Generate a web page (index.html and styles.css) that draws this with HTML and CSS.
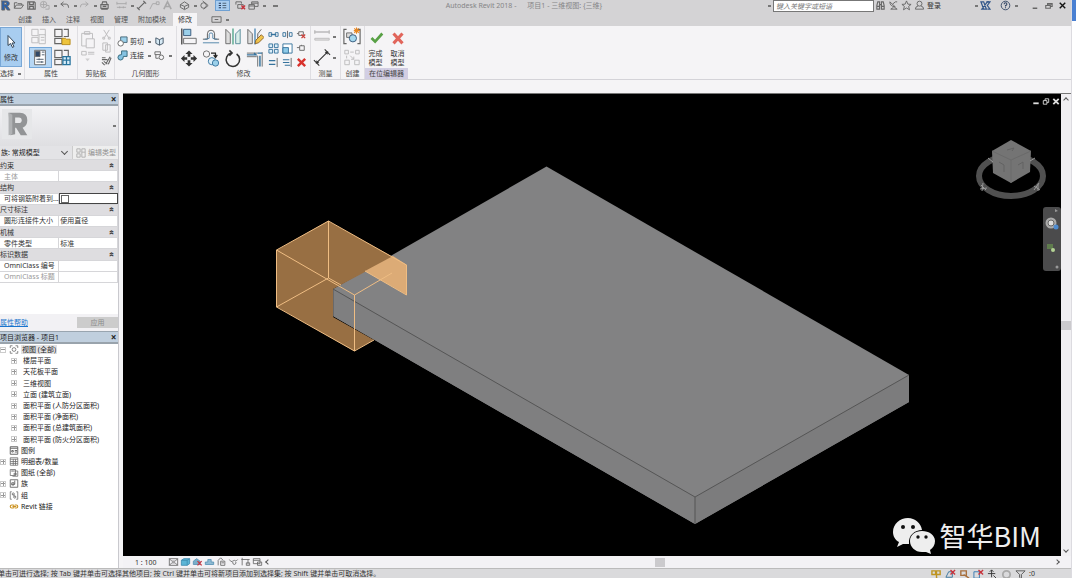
FILE: index.html
```html
<!DOCTYPE html>
<html lang="zh-CN">
<head>
<meta charset="utf-8">
<title>Autodesk Revit 2018</title>
<link rel="stylesheet" href="styles.css">
</head>
<body>
<div class="app">
  <header class="titlebar">
    <div class="quick">
      <button class="ic" aria-label="应用程序菜单"><svg viewBox="0 0 12 12"><path d="M1 1h6c4 0 4 5 1 5.500l3 4.500h-3l-3-4v4H2V1" fill="#2a62ad"/><path d="M4.500 3h2.500v2H4.500z" fill="#d4e4f4"/></svg></button>
      <button class="ic" aria-label="打开"><svg viewBox="0 0 12 12"><path d="M1.500 9V3h3l1 1h4v1.500M1.500 9l2-3.500h8L9 9z"/></svg></button>
      <button class="ic" aria-label="保存"><svg viewBox="0 0 12 12"><path d="M2 2h7l1 1v7H2zM4 2v3h4V2M4 10V7h4v3" stroke-width="1.300"/></svg></button>
      <button class="ic faint" aria-label="同步"><svg viewBox="0 0 12 12"><circle cx="5" cy="5" r="3.500"/><path d="M2 5h6M5 2v6M8 6h3v4H7"/></svg></button><i class="car"></i>
      <button class="ic" aria-label="放弃"><svg viewBox="0 0 12 12"><path d="M5 2L2 4.500 5 7M2 4.500h6q2.500 0 2.500 4"/></svg></button><i class="car"></i>
      <button class="ic faint" aria-label="重做"><svg viewBox="0 0 12 12"><path d="M7 2l3 2.500L7 7M10 4.500H4Q1.500 4.500 1.500 8"/></svg></button><i class="car"></i>
      <button class="ic" aria-label="打印"><svg viewBox="0 0 12 12"><path d="M3 5l1-3h4l1 3M2 5h8v4H2zM3 9v1h6V9M4 7h4" stroke-width="1.200"/></svg></button>
      <button class="ic gap faint" aria-label="测量"><svg viewBox="0 0 12 12"><path d="M1 4h10M1 2v3M11 2v3M1 8h10M4 7v2M8 7v2"/></svg></button><i class="car"></i>
      <button class="ic" aria-label="尺寸标注"><svg viewBox="0 0 12 12"><path d="M2 10L10 2M1 8l3 3M8 1l3 3" stroke-width="1.300"/></svg></button>
      <button class="ic faint" aria-label="标记"><svg viewBox="0 0 12 12"><path d="M1 10l3-6h4M8 2h3v3H8z"/></svg></button>
      <button class="ic faint" aria-label="文字"><svg viewBox="0 0 12 12"><path d="M2 10L6 2l4 8M3.500 7h5" stroke-width="1.700"/></svg></button>
      <button class="ic gap" aria-label="三维视图"><svg viewBox="0 0 12 12"><path d="M1.500 5L6 2l4.500 3v3L6 10.500 1.500 8zM1.500 5L6 7l4.500-2M6 7v3"/></svg></button><i class="car"></i>
      <button class="ic" aria-label="剖面"><svg viewBox="0 0 12 12"><circle cx="5" cy="6" r="3"/><path d="M4 1l6 5-5 4"/></svg></button>
      <button class="ic on" aria-label="细线"><svg viewBox="0 0 12 12"><path d="M1 3h3M1 6h3M1 9h3" stroke="#263b5c" stroke-width="1.600"/><path d="M6 3h5M6 6h5M6 9h5" stroke="#345"/></svg></button>
      <button class="ic" aria-label="关闭隐藏窗口"><svg viewBox="0 0 12 12"><path d="M1 5V2h6v2M3 5h6v4H3z"/><path d="M7 6l4 4M11 6l-4 4" stroke="#c8333c" stroke-width="1.500"/></svg></button>
      <button class="ic" aria-label="切换窗口"><svg viewBox="0 0 12 12"><path d="M1 5h6v5H1zM4 5V2h7v5H7M4 3.500h7M1 6.500h6"/></svg></button><i class="car"></i>
      <i class="car big"></i>
    </div>
    <h1 class="title">Autodesk Revit 2018 - &nbsp; &nbsp; &nbsp;项目1 - 三维视图: {三维}</h1>
    <div class="info">
      <i class="car side-car"></i>
      <input class="search" type="text" aria-label="搜索" placeholder="键入关键字或短语">
      <button class="ic" aria-label="查找"><svg viewBox="0 0 12 12"><path d="M2 10V6l1-4h2v8zM7 10V2h2l1 4v4zM5 5h2M2 7h3M7 7h3" stroke-width="1.200"/></svg></button>
      <button class="ic" aria-label="通讯中心"><svg viewBox="0 0 12 12"><path d="M2 2q0 5 6 5.500zM5 4.500L8 2M8 2h2M6 8l-3 2h7L7 8"/></svg></button>
      <button class="ic" aria-label="收藏夹"><svg viewBox="0 0 12 12"><path d="M6 1l1.500 3.500 3.500.3L8.300 7l1 3.700L6 8.700l-3.300 2 1-3.700L1 4.800l3.500-.3z"/></svg></button>
      <button class="ic" aria-label="用户"><svg viewBox="0 0 12 12"><circle cx="6" cy="4" r="2.700"/><path d="M4.500 6.500Q1.500 7 1.500 10h9q0-3-3-3.500"/></svg></button>
      <button class="login">登录</button><i class="car far"></i>
      <button class="ic" aria-label="应用商店"><svg viewBox="0 0 12 12"><path d="M1 2h3l3 8H4zM10 2H8L2 10h2" stroke="#34588b" stroke-width="1.300"/><path d="M7 2h4L8 6l3 4H8" stroke="#34588b" stroke-width="1.300"/></svg></button>
      <button class="ic help" aria-label="帮助"><svg viewBox="0 0 12 12"><circle cx="6" cy="6" r="4.700" stroke="#334766"/><path d="M4.500 4.500q0-1.500 1.500-1.500t1.500 1.500Q7.500 5.500 6 6v1M6 8v1" stroke="#334766" stroke-width="1.200"/></svg></button><i class="car"></i>
      <button class="ic win first" aria-label="最小化"><svg viewBox="0 0 12 12"><path d="M4 9h5" stroke-width="1.600"/></svg></button>
      <button class="ic win" aria-label="还原"><svg viewBox="0 0 12 12"><path d="M3 6h5v3H3zM5 6V4h5v3H8M5 4.500h5" stroke-width="1.200"/></svg></button>
      <button class="ic win" aria-label="关闭"><svg viewBox="0 0 12 12"><path d="M3 3l6 6M9 3L3 9" stroke="#111" stroke-width="1.500"/></svg></button>
    </div>
  </header>

  <nav class="tabs">
    <a href="#">创建</a><a href="#">插入</a><a href="#">注释</a><a href="#">视图</a><a href="#">管理</a><a href="#">附加模块</a><a href="#" class="active">修改</a>
    <button class="ic" aria-label="面板显示"><svg viewBox="0 0 12 12"><path d="M1 3h10v6H1zM4 6h4" stroke="#666"/></svg></button><i class="car"></i>
  </nav>

  <div class="ribbon">
    <section class="grp select">
      <button class="bigsel"><svg viewBox="0 0 16 16"><path d="M5 2v10l2.500-2 2 4 1.500-1-2-3.500h3z" fill="#fff" stroke="#345"/></svg>修改</button>
      <h2>选择 <i class="car dark"></i></h2>
    </section>
    <section class="grp">
      <div class="cells props">
        <button class="b faint" aria-label="类型属性"><svg viewBox="0 0 20 20"><path d="M2 2h7v7H2zM11 2h6v7M2 11h7v6H2zM10 8h7v10h-7zM12 11h4M12 14h4"/></svg></button>
        <button class="b" aria-label="族类别"><svg viewBox="0 0 20 20"><path d="M2 2h8v8H2zM12 2h5v8h-5M2 12h8v6H2z" stroke-width="1.300"/><path d="M10 12h4l1 1h4v6h-9z" fill="#edc33c" stroke="#b58919"/></svg></button>
        <button class="b lit" aria-label="属性"><svg viewBox="0 0 20 20"><path d="M4 2h12v16H4z" fill="#fff"/><path d="M5 3h5v6H5z" fill="#314866"/><path d="M12 4h3M12 7h3M6 12h8M6 15h8M9 11v2M12 14v2" stroke="#456"/></svg></button>
        <button class="b" aria-label="族类型"><svg viewBox="0 0 20 20"><path d="M2 2h8v8H2zM12 2h5v8h-5M2 12h8v6H2z" stroke-width="1.300"/><path d="M11 9h8v9h-8zM15 9v9M11 13h8" stroke="#27739d" stroke-width="1.400" fill="#d8edf8"/></svg></button>
      </div>
      <h2>属性</h2>
    </section>
    <section class="grp tight">
      <div class="cells clip">
        <button class="b tall faint" aria-label="粘贴"><svg viewBox="0 0 20 36"><path d="M3 4h12v6M3 4v14h5M6 2h6v3H6zM8 10h9v10H8zM3 24h5v4H3zM10 25h7M10 27h7"/><path d="M7 32h5l-2.500 3z" fill="#999" stroke="none"/></svg></button>
        <div class="col">
          <button class="s faint" aria-label="剪切"><svg viewBox="0 0 12 12"><path d="M3 1l5 8M9 1L4 9M2 9h2v2H2zM8 9h2v2H8z"/></svg></button>
          <button class="s faint" aria-label="复制"><svg viewBox="0 0 12 12"><path d="M2 1h5v8H2zM5 3h5v8H5z"/></svg></button>
          <button class="s" aria-label="匹配类型"><svg viewBox="0 0 12 12"><path d="M1 3h4M1 5h6M1 8l3 3M5 10l5-8M8 10l3-7M3 7l4 3" stroke-width="1.200"/></svg></button>
        </div>
      </div>
      <h2>剪贴板</h2>
    </section>
    <section class="grp">
      <div class="geom">
        <button class="t"><svg viewBox="0 0 12 12"><path d="M4 1h7v6H4z" fill="#9bd0ea" stroke="#467"/><circle cx="4" cy="8" r="3" fill="#fff"/></svg>剪切</button><i class="car"></i>
        <button class="s" aria-label="面"><svg viewBox="0 0 12 12"><path d="M2 2l4 2v6L2 8zM6 4l4-2v6l-4 2" fill="#d7eaf5" stroke="#456"/></svg></button>
        <span></span>
        <button class="t"><svg viewBox="0 0 12 12"><path d="M5 1h6v6H7q0 4-3 4T1 8t4-3z" fill="#86c3e2" stroke="#367"/></svg>连接</button><i class="car"></i>
        <button class="s" aria-label="拆分面"><svg viewBox="0 0 12 12"><path d="M1 2h6v3H1zM2 5v4h3"/><circle cx="8" cy="8" r="2.500"/></svg></button><i class="car"></i>
      </div>
      <h2>几何图形</h2>
    </section>
    <section class="grp">
      <div class="modify">
        <div class="cells four">
          <button class="b" aria-label="对齐"><svg viewBox="0 0 20 20"><path d="M2 1v18" stroke="#444" stroke-width="1.500"/><path d="M4 2h8v7H4z" fill="#9bd0ea" stroke="#357"/><path d="M4 12h14v6H4z"/></svg></button>
          <button class="b" aria-label="偏移"><svg viewBox="0 0 20 20"><path d="M1 13h5V7q0-4 4-4t4 4v6h5" stroke="#555"/><path d="M1 17h18M3 13q3 0 5-1V8q0-2 2-2t2 2v4q2 1 5 1" stroke="#4a7fa5"/></svg></button>
          <button class="b" aria-label="镜像-拾取轴"><svg viewBox="0 0 20 20"><path d="M2 2l5 5v11H2z" fill="#ddd"/><path d="M18 2l-5 5v11h5z" fill="#d9eee8" stroke="#589"/><path d="M10 1v18" stroke="#397" stroke-width="1.300"/></svg></button>
          <button class="b" aria-label="镜像-绘制轴"><svg viewBox="0 0 20 20"><path d="M2 2l5 5v11H2zM17 2l-4 5v5" fill="#ddd"/><path d="M10 1v18" stroke="#37a" stroke-width="1.300"/><path d="M10 18l1-4 6-6 3 3-6 6z" fill="#f0c34c" stroke="#876027"/></svg></button>
          <button class="b" aria-label="移动"><svg viewBox="0 0 20 20"><path d="M10 1l4 4h-2.500v3h-3V5H6zM10 19l-4-4h2.500v-3h3v3H14zM1 10l4-4v2.500h3v3H5V14zM19 10l-4 4v-2.500h-3v-3h3V6z" fill="#333" stroke="none"/></svg></button>
          <button class="b" aria-label="复制图元"><svg viewBox="0 0 20 20"><circle cx="5" cy="5" r="3.500"/><path d="M10 4h5v4M13 6l2 3 2-3" stroke="#222" stroke-width="1.300"/><circle cx="11" cy="13" r="4" fill="#dceffa" stroke="#37739d"/><circle cx="15" cy="15" r="3.500" fill="#9bd0ea" stroke="#37739d"/></svg></button>
          <button class="b" aria-label="旋转"><svg viewBox="0 0 20 20"><path d="M8 4a7.500 7.500 0 1 0 6 1M6 1l3 3-3 3" stroke="#333" stroke-width="1.700"/></svg></button>
          <button class="b" aria-label="修剪"><svg viewBox="0 0 20 20"><path d="M1 4h12M13 7v12M18 3v16M1 8h11" stroke="#666"/><path d="M1 6h10l-2-2M13 4h5M15.500 7v12" stroke="#37739d" stroke-width="1.600"/></svg></button>
        </div>
        <div class="three">
          <button class="s" aria-label="拆分图元"><svg viewBox="0 0 12 12"><path d="M1 4h3v4H1zM8 4h3v4H8z" stroke="#37739d"/><path d="M3 6h6" stroke="#37739d" stroke-width="1.500"/></svg></button>
          <button class="s" aria-label="间隙拆分"><svg viewBox="0 0 12 12"><path d="M1 4h3v4H1zM8 4h3v4H8z" stroke="#37739d"/><path d="M6 2v8"/></svg></button>
          <button class="s" aria-label="解锁"><svg viewBox="0 0 12 12"><path d="M3 3h5v4H3zM1 5h2"/><path d="M6 6l4 4M10 6l-4 4" stroke="#cc3f38" stroke-width="1.400"/></svg></button>
          <button class="s" aria-label="阵列"><svg viewBox="0 0 12 12"><path d="M1 1h4v4H1zM7 1h4v4H7zM1 7h4v4H1zM7 7h4v4H7z" fill="#dceffa" stroke="#37739d"/></svg></button>
          <button class="s" aria-label="缩放"><svg viewBox="0 0 12 12"><path d="M1 1h10v10H1z" fill="#fff" stroke="#37739d"/><path d="M1 5h6v6H1z" fill="#8ecbe9" stroke="#37739d"/></svg></button>
          <button class="s" aria-label="锁定"><svg viewBox="0 0 12 12"><path d="M4 3h5v5H4zM1 5h3M6 3V2"/></svg></button>
          <button class="s" aria-label="修剪单个"><svg viewBox="0 0 12 12"><path d="M10 1v10"/><path d="M1 4h7M1 8h7" stroke="#37739d" stroke-width="1.300"/></svg></button>
          <button class="s" aria-label="修剪多个"><svg viewBox="0 0 12 12"><path d="M10 1v10"/><path d="M1 3h7M1 6h7M3 9h6" stroke="#37739d" stroke-width="1.300"/></svg></button>
          <button class="s" aria-label="删除"><svg viewBox="0 0 12 12"><path d="M2 2l8 8M10 2l-8 8" stroke="#d8322c" stroke-width="2.600"/></svg></button>
        </div>
      </div>
      <h2>修改</h2>
    </section>
    <section class="grp">
      <div class="measure">
        <button class="b faint" aria-label="对齐标注"><svg viewBox="0 0 20 20"><path d="M2 5h16M2 3v4M18 3v4" stroke-width="1.500"/><path d="M2 12h16v2H2z" fill="#ccc"/></svg></button><i class="car"></i>
        <button class="b" aria-label="测量距离"><svg viewBox="0 0 20 20"><path d="M4 16L16 4M1 13l6 6M13 1l6 6" stroke="#333" stroke-width="1.200"/><path d="M3 17l1-4 3 3zM17 3l-4 1 3 3z" fill="#333" stroke="none"/></svg></button><i class="car"></i>
      </div>
      <h2>测量</h2>
    </section>
    <section class="grp">
      <div class="cells one">
        <button class="b" aria-label="创建组"><svg viewBox="0 0 20 20"><path d="M4 2H1v16h3M16 2h3v16h-3" stroke-width="1.300"/><path d="M4 6h6v5H4z" fill="#ddd"/><circle cx="11" cy="12" r="4" fill="#a5d8ef" stroke="#357"/><path d="M15 0v7M12 3.500h7M12.500 1l5 5M17.500 1l-5 5" stroke="#e78621" stroke-width="1.200"/></svg></button>
        <button class="b faint" aria-label="创建类似"><svg viewBox="0 0 20 20"><path d="M2 2h4v4H2zM14 2h4v4h-4zM8 4h4M4 8v3M2 13h5v5H2zM13 13h5v5h-5zM8 8l4 4M12 9v3H9"/></svg></button>
      </div>
      <h2>创建</h2>
    </section>
    <section class="grp editor">
      <div class="finish">
        <button><svg viewBox="0 0 20 20"><path d="M5 10l4 4 8-9" stroke="#58a045" stroke-width="3"/></svg>完成<br>模型</button>
        <button><svg viewBox="0 0 20 20"><path d="M5 5l10 11M15 5L5 16" stroke="#e1655b" stroke-width="3.400"/></svg>取消<br>模型</button>
      </div>
      <h2>在位编辑器</h2>
    </section>
  </div>

  <main class="work">
    <aside class="side">
      <div class="phead"><h2>属性</h2><button aria-label="关闭属性">×</button></div>
      <div class="preview"><svg viewBox="0 0 32 32"><path d="M0 0h32v32H0z" fill="#e6e7e9"/><path d="M7 4h12q8 0 8 8 0 6-5 8l5 8h-7l-5-8h-1v7l-5 1z" fill="#929496"/><path d="M7 4l4 2v21l-4 1z" fill="#b0b2b4"/><path d="M14 9h4q3 0 3 3t-3 3h-4z" fill="#e6e7e9"/></svg><i class="car"></i></div>
      <div class="type">
        <div class="pick"><select aria-label="类型"><option>族: 常规模型</option></select></div>
        <button disabled><svg viewBox="0 0 12 12"><path d="M1 1h4v4H1zM7 1h4v10H7zM1 7h4v4H1zM7 5h4"/></svg>编辑类型</button>
      </div>
      <table class="ptable">
        <tr class="g"><th colspan="2">约束<b>«</b></th></tr>
        <tr class="off"><td>主体</td><td></td></tr>
        <tr class="g"><th colspan="2">结构<b>«</b></th></tr>
        <tr><td><label for="rebar">可将钢筋附着到...</label></td><td class="focus"><input id="rebar" type="checkbox"></td></tr>
        <tr class="g"><th colspan="2">尺寸标注<b>«</b></th></tr>
        <tr><td>圆形连接件大小</td><td>使用直径</td></tr>
        <tr class="g"><th colspan="2">机械<b>«</b></th></tr>
        <tr><td>零件类型</td><td>标准</td></tr>
        <tr class="g"><th colspan="2">标识数据<b>«</b></th></tr>
        <tr><td>OmniClass 编号</td><td></td></tr>
        <tr class="off"><td>OmniClass 标题</td><td></td></tr>
      </table>
      <div class="pfoot"><a href="#">属性帮助</a><button disabled>应用</button></div>
      <div class="phead"><h2>项目浏览器 - 项目1</h2><button aria-label="关闭项目浏览器">×</button></div>
      <ul class="tree">
        <li><i class="ex minus"></i><svg viewBox="0 0 12 12"><path d="M1 4V1h3M8 1h3v3M11 8v3H8M4 11H1V8"/><circle cx="6" cy="6" r="2.500"/></svg><span class="sel">视图 (全部)</span></li>
        <li class="sub"><i class="ex"></i>楼层平面</li>
        <li class="sub"><i class="ex"></i>天花板平面</li>
        <li class="sub"><i class="ex"></i>三维视图</li>
        <li class="sub"><i class="ex"></i>立面 (建筑立面)</li>
        <li class="sub"><i class="ex"></i>面积平面 (人防分区面积)</li>
        <li class="sub"><i class="ex"></i>面积平面 (净面积)</li>
        <li class="sub"><i class="ex"></i>面积平面 (总建筑面积)</li>
        <li class="sub"><i class="ex"></i>面积平面 (防火分区面积)</li>
        <li><i class="ex none"></i><svg viewBox="0 0 12 12"><path d="M1 1h10v10H1zM1 3h10M3 6h2v2H3zM7 6h3M7 8h3" stroke-width="1.300"/></svg>图例</li>
        <li><i class="ex"></i><svg viewBox="0 0 12 12"><path d="M1 1h10v10H1zM1 3h10M1 6h10M1 8.500h10M5 3v8M8 3v8"/></svg>明细表/数量</li>
        <li><i class="ex none"></i><svg viewBox="0 0 12 12"><path d="M1 2h7v8H1zM4 4h7v7H4M2 4h3M6 7h3v2H6z"/></svg>图纸 (全部)</li>
        <li><i class="ex"></i><svg viewBox="0 0 12 12"><path d="M1 1h10v10H1zM3 5h3v3H3zM7 2v5H3" stroke-width="1.200"/></svg>族</li>
        <li><i class="ex"></i><svg viewBox="0 0 12 12"><path d="M3 1H1v10h2M9 1h2v10H9M4 4l4 4"/><circle cx="5" cy="4" r="1.500"/><circle cx="7" cy="8" r="1.500"/></svg>组</li>
        <li><i class="ex none"></i><svg viewBox="0 0 12 12"><path d="M3 4h2q1 0 1 2t-1 2H3Q1 8 1 6t2-2zM7 4h2q2 0 2 2T9 8H7M4 6h5" stroke="#cb9220" stroke-width="1.500"/></svg>Revit 链接</li>
      </ul>
    </aside>

    <div class="view">
      <div class="canvas">
        <svg class="scene" viewBox="123 94 938 462" role="img" aria-label="三维模型">
          <path d="M546.500 166.500L909 375V402L695 524 333 316V289z" fill="#828283"/>
          <path d="M333 289L695 497V524L333 316z" fill="#7f7f80"/>
          <path d="M695 497L909 375V402L695 524z" fill="#7c7c7d"/>
          <path d="M333 289L695 497 909 375M695 497V524M333 289V316" fill="none" stroke="#555"/>
          <path d="M328 221L393 257 333 289V317L374 340 354 351 277 307V250z" fill="#986f43"/>
          <path d="M365 271L393 256 407 265V295z" fill="#dcab76"/>
          <path d="M276.500 250L328.500 221 406.500 265V295L365 271M276.500 250V307L354.500 351V295L276.500 250M354.500 295L392 273M328.500 221V278L276.500 307M328.500 278L341 285M354.500 351L374 340" fill="none" stroke="#efbd83"/>
        </svg>
        <div class="wctl"><button aria-label="最小化视图"><svg viewBox="0 0 10 10"><path d="M2 7h6" stroke-width="2"/></svg></button><button aria-label="还原视图"><svg viewBox="0 0 10 10"><path d="M2 4h4v4H2zM4 4V2h4v4H6"/></svg></button><button aria-label="关闭视图"><svg viewBox="0 0 10 10"><path d="M2 2l6 6M8 2L2 8" stroke-width="2"/></svg></button></div>
        <svg class="cube" viewBox="0 0 72 62" role="img" aria-label="视图立方体"><ellipse cx="36" cy="37" rx="32" ry="20" fill="none" stroke="#505050" stroke-width="6"/><path d="M36 1L56 12 55 33 36 44 18 34 17 12z" fill="#747474"/><path d="M17 12L36 21 56 12M36 21V44" fill="none" stroke="#6a6a6a"/><path d="M32 11l7-2-2 3M24 23l5 3v7M43 26l5-3v7" fill="none" stroke="#626262"/><path d="M6 46l5 5M5 50l7-1M8 44l-1 8M59 47l6 4M59 51l5-7M63 45v7M13 19l5 4M55 22l5-3" stroke="#999"/></svg>
        <div class="nav">
          <svg viewBox="0 0 18 64"><path d="M12 2l3 2-3 1z" fill="#999"/><circle cx="8" cy="16" r="5.500" fill="#aaa"/><circle cx="8" cy="16" r="3" fill="#ddd" stroke="#666"/><circle cx="13" cy="20" r="2.500" fill="#4d8bd0"/><path d="M4 37h6v5H4z" fill="#5f7c4d"/><circle cx="10" cy="43" r="2" fill="#b4d394"/><circle cx="14" cy="60" r="1.500" fill="#999"/></svg>
        </div>
        <div class="mark"><svg viewBox="0 0 42 36"><path d="M15 0C7 0 0 6 0 14c0 4 2 8 6 10l-2 5 6-3h6C15 17 22 12 29 12 28 5 22 0 15 0z" fill="#eee"/><path d="M29 13c-7 0-12 4-12 10s5 11 12 11h4l5 2-1-4c3-2 5-5 5-9 0-6-6-10-13-10z" fill="#eee"/><g fill="#111"><circle cx="10" cy="9" r="2"/><circle cx="20" cy="9" r="2"/><circle cx="25" cy="19" r="1.700"/><circle cx="33" cy="19" r="1.700"/></g></svg>智华BIM</div>
      </div>
      <div class="vscroll"><b class="up"></b><b class="thumb"></b><b class="down"></b></div>
      <div class="vbar">
        <span class="scale">1 : 100</span>
        <button class="s" aria-label="详细程度"><svg viewBox="0 0 12 12"><path d="M1 2h10v8H1zM1 2l3 3h4l3-3M1 10l3-3h4l3 3"/></svg></button>
        <button class="s" aria-label="视觉样式"><svg viewBox="0 0 12 12"><path d="M1 4l3-2h7v6l-3 2H1z" fill="#5bb5d6" stroke="#3d8cb0"/><path d="M1 4h7v6M8 4l3-2" stroke="#3d8cb0"/></svg></button>
        <button class="s" aria-label="阴影"><svg viewBox="0 0 12 12"><path d="M1 9V5l4-3 4 3v4z" fill="#78aec9" stroke="#5791b5"/><path d="M6 5l5 5M11 5l-5 5" stroke="#ca3540" stroke-width="1.500"/></svg></button>
        <button class="s" aria-label="裁剪视图"><svg viewBox="0 0 12 12"><path d="M1 9V6h3V3h4v3h3v3z" fill="#8fbad3" stroke="#5791b5"/></svg></button>
        <button class="s" aria-label="显示裁剪"><svg viewBox="0 0 12 12"><path d="M2 10V4l3-3 3 3M5 5h5v5H5zM6 7h3"/></svg></button>
        <button class="s" aria-label="临时隐藏"><svg viewBox="0 0 12 12"><path d="M1 3q2 4 4 2t4 0l2-2M5 6q0 3 2 3t2-3"/></svg></button>
        <button class="s" aria-label="显示隐藏"><svg viewBox="0 0 12 12"><path d="M1 3h10M2 1v9M9 3v6M7 7h4v3H7z"/></svg></button>
        <button class="s" aria-label="分析模型"><svg viewBox="0 0 12 12"><path d="M1 2h8v6H1zM1 4h8M6 6h5v4H6z"/></svg></button>
        <b class="left"></b><span class="track"><b class="thumb"></b></span><b class="right"></b>
      </div>
    </div>
  </main>

  <footer class="status">
    <p>单击可进行选择; 按 Tab 键并单击可选择其他项目; 按 Ctrl 键并单击可将新项目添加到选择集; 按 Shift 键并单击可取消选择。</p>
    <div class="filters">
      <svg viewBox="0 0 12 12"><path d="M1 2h4v4H1zM6 2h4v4H6zM6 6v4l3 1" stroke="#be9420" stroke-width="1.500"/></svg>
      <svg viewBox="0 0 12 12"><path d="M1 9l3-6h4v6z" stroke="#37739d"/><path d="M6 1l5 5M11 1L6 6" stroke="#c8333c" stroke-width="1.500"/></svg>
      <svg viewBox="0 0 12 12"><path d="M2 2h6v5H2zM5 6l6 4" stroke="#a86f3c" stroke-width="1.500"/></svg>
      <svg viewBox="0 0 12 12"><path d="M1 3h6v7H1z" stroke="#3679b2"/><path d="M6 1l5 5M11 1L6 6" stroke="#c8333c" stroke-width="1.500"/></svg>
      <svg viewBox="0 0 12 12"><path d="M5 1v8M1 5h8M7 7l4 4M3 3l2-2 2 2" stroke="#333"/></svg>
      <svg viewBox="0 0 12 12"><circle cx="6" cy="6" r="4" stroke="#aaa" stroke-width="2"/></svg>
      <svg viewBox="0 0 12 12"><path d="M1 2h10L7 6v5L5 9V6z" stroke="#555"/></svg><span>:0</span>
    </div>
  </footer>
</div>
<div class="edge"></div>
</body>
</html>
```

FILE: styles.css
```css
* { box-sizing: border-box; }
body {
  margin: 0; height: 100vh; display: flex; overflow: hidden;
  font: 7px/9px "Noto Sans", "Noto Sans CJK SC", sans-serif;
  color: #333; background: #fff;
}
h1, h2, p, ul { margin: 0; padding: 0; font: inherit; }
button { font: inherit; color: inherit; background: none; border: 0; padding: 0; margin: 0; display: block; flex: none; }
svg { display: block; fill: none; stroke: #666; stroke-width: 1; }
a { color: inherit; text-decoration: none; }
.app { flex: 1; min-width: 0; display: flex; flex-direction: column; background: #f5f4f6; border-right: 1px solid #dcdbe0; }
.edge { width: 4px; background: linear-gradient(#4a80d2 21px, #fff 21px); }
.faint { opacity: .4; }
.car { flex: none; width: 7px; height: 4px; background: linear-gradient(#777, #777) center / 3px 2px no-repeat; }
.car.big { width: 14px; background-size: 5px 2px; }
.car.dark { display: inline-block; }

.titlebar { display: flex; align-items: center; height: 13px; padding-bottom: 2px; background: #d4d3d5; }
.quick, .info { display: flex; align-items: center; flex: none; }
.ic { width: 12px; height: 11px; margin-right: 1px; }
.ic svg { width: 11px; height: 11px; }
.ic.gap { margin-left: 4px; }
.ic.on { width: 15px; margin: 0 5px 0 3px; background: #a9cdf0; border: 1px solid #6fa0d2; padding-left: 1px; }
.ic.on svg { width: 11px; height: 9px; }
.title { flex: 1; text-align: center; color: #858587; white-space: nowrap; }
.search { width: 101px; height: 12px; border: 1px solid #777; background: #fff; padding: 0 2px; margin-right: 1px; font: italic 7px "Noto Sans CJK SC", sans-serif; }
.search::placeholder { color: #777; opacity: 1; }
.login { margin-right: 32px; }
.help { margin-left: 7px; }
.win { margin-right: 2px; }
.win.first { margin-left: 9px; }

.tabs { display: flex; align-items: center; height: 13px; padding-left: 13px; background: #d4d3d5; color: #555; }
.tabs a { padding: 0 5px; height: 13px; line-height: 13px; }
.tabs .active { background: #f5f4f6; margin: 0 14px 0 2px; color: #333; }

.ribbon { display: flex; height: 54px; border-bottom: 1px solid #d4d3d8; }
.grp { display: flex; flex-direction: column; justify-content: space-between; padding: 1px 2px 0; border-right: 1px solid #dfdee2; }
.grp.tight { padding: 1px 1px 0; }
.grp h2 { text-align: center; white-space: nowrap; height: 11px; line-height: 11px; color: #444; }
.grp.select { padding: 1px 1px 0 0; width: 25px; }
.bigsel { width: 22px; height: 40px; background: #a8cdf0; border: 1px solid #79a7d6; text-align: center; }
.bigsel svg { width: 16px; height: 17px; margin: 0 auto 3px; }
.cells { display: grid; gap: 2px 4px; grid-template-columns: 19px 19px; justify-content: center; }
.b { width: 18px; height: 19px; }
.b svg { width: 18px; height: 19px; }
.props { padding: 0 3px; }
.lit { width: 21px; background: #b7d7f4; outline: 1px solid #74a7d8; padding-left: 1px; }
.clip { grid-template-columns: 18px 12px; }
.tall, .tall svg { height: 38px; }
.col { display: grid; gap: 2px; padding-top: 2px; }
.s, .s svg { width: 11px; height: 11px; }
.geom { display: grid; grid-template-columns: 28px 7px 12px 7px; gap: 3px 1px; align-items: center; padding-top: 9px; }
.t { display: flex; gap: 2px; align-items: center; white-space: nowrap; }
.t svg { width: 11px; height: 11px; }
.modify { display: flex; gap: 4px; padding: 0 1px; }
.four { grid-template-columns: repeat(4, 18px); }
.three { display: grid; grid-template-columns: repeat(3, 11px); gap: 3px; align-content: start; padding-top: 2px; }
.measure { display: grid; grid-template-columns: 18px 7px; gap: 2px 0; align-items: center; }
.one { grid-template-columns: 19px; }
.editor { padding: 1px 0 0; border-right: 0; }
.editor h2 { background: #d2cee3; padding: 0 4px; }
.finish { display: flex; gap: 3px; justify-content: center; }
.finish button { width: 19px; text-align: center; }
.finish svg { width: 18px; height: 22px; margin: 0 auto; }

.work { flex: 1; min-height: 0; display: flex; padding-top: 13px; }
.side { width: 119px; flex: none; display: flex; flex-direction: column; margin-right: 4px; background: #fff; border-right: 1px solid #c9c9ce; }
.phead { display: flex; justify-content: space-between; align-items: center; height: 13px; flex: none; background: #c0cfde; border-top: 1px solid #99a5b0; border-bottom: 2px solid #99a3ac; overflow: hidden; color: #222; }
.phead button { width: 9px; font-size: 10px; font-weight: bold; }
.phead h2 { white-space: nowrap; }
.preview { height: 40px; flex: none; display: flex; justify-content: space-between; align-items: center; background: linear-gradient(#f3f3f5, #dfdfe2); }
.preview svg { width: 34px; height: 30px; stroke: none; margin-bottom: 4px; }
.type { display: flex; height: 13px; flex: none; background: #eee; }
.pick { position: relative; flex: none; width: 73px; display: flex; border-right: 1px solid #ccc; }
.pick::after { content: ""; position: absolute; right: 5px; top: 3px; width: 4px; height: 4px; border: solid #555; border-width: 0 1px 1px 0; transform: rotate(45deg); pointer-events: none; }
.type select { flex: 1; border: 0; padding: 0 0 0 1px; font: inherit; color: #222; appearance: none; background: #e3e3e6; }
.type button { display: flex; align-items: center; gap: 2px; padding-left: 3px; opacity: .5; white-space: nowrap; }
.type svg { width: 10px; height: 10px; }
.ptable { border-collapse: collapse; table-layout: fixed; width: 100%; height: 124px; flex: none; }
.ptable td, .ptable th { padding: 0; height: 11px; font-weight: normal; line-height: 9px; text-align: left; white-space: nowrap; border: 1px solid #d6d6d9; border-left: 0; border-bottom: 0; }
.ptable td:first-child { padding-left: 4px; }
.ptable td + td { padding-left: 1px; }
.ptable th { background: #dedde0; }
.ptable th b { float: right; width: 9px; text-align: center; transform: rotate(90deg); font-size: 8px; }
.ptable tr:last-child td { border-bottom: 1px solid #d6d6d9; }
.ptable .off { color: #999; }
.ptable .focus { outline: 1px solid #444; outline-offset: -1px; }
.ptable input { appearance: none; display: block; width: 8px; height: 8px; border: 1px solid #666; margin: 0 1px; }
.pfoot { display: flex; justify-content: space-between; align-items: center; margin-top: 31px; padding-bottom: 1px; flex: none; height: 17px; background: #f2f1f4; }
.pfoot a { color: #1a75cd; text-decoration: underline; }
.pfoot button { width: 41px; height: 11px; background: #ccc; color: #8a8a8a; }

.tree { list-style: none; display: grid; grid-auto-rows: 1fr; flex: none; height: 168px; color: #222; }
.tree li { display: flex; align-items: center; white-space: nowrap; min-height: 0; }
.tree li svg { width: 10px; height: 9px; margin: 0 2px 0 3px; }
.tree .sub { padding-left: 11px; }
.tree .sub .ex { margin-right: 6px; }
.ex { width: 6px; height: 6px; flex: none; border: 1px solid #ccc; background: linear-gradient(#999, #999) center / 4px 1px no-repeat, linear-gradient(#999, #999) center / 1px 4px no-repeat; }
.ex.minus { background: linear-gradient(#999, #999) center / 4px 1px no-repeat; }
.ex.none { visibility: hidden; }
.sel { background: #e2e2e4; padding: 0 1px; }

.view { flex: 1; min-width: 0; display: grid; grid-template: 1fr 12px / 1fr 10px; border-top: 1px solid #777; }
.canvas { position: relative; background: #000; overflow: hidden; }
.scene { position: absolute; inset: 0; width: 100%; height: 100%; stroke: none; }
.wctl { position: absolute; top: 3px; right: 0; display: flex; }
.wctl svg { width: 10px; height: 9px; stroke: #ddd; }
.cube { position: absolute; top: 45px; right: 14px; width: 72px; height: 62px; stroke: none; }
.nav { position: absolute; top: 113px; right: 0; background: #4b4b4c; border-radius: 3px; }
.nav svg { width: 18px; height: 64px; stroke: none; }
.mark { position: absolute; right: 20px; bottom: 1px; display: flex; align-items: center; gap: 4px; color: #eee; font: 27px/38px "Noto Sans CJK SC", sans-serif; }
.mark svg { width: 42px; height: 36px; stroke: none; }
.vscroll { display: flex; flex-direction: column; align-items: center; justify-content: space-between; padding: 4px 0; background: #f0eff2; }
.thumb { background: #cbcacd; width: 10px; height: 9px; display: block; }
.up, .down, .left, .right { width: 4px; height: 4px; border: solid #555; border-width: 1px 0 0 1px; transform: rotate(45deg); }
.down { transform: rotate(225deg); }
.left { transform: rotate(-45deg); margin-left: 2px; }
.right { transform: rotate(135deg); }
.vbar { grid-column: 1 / -1; display: flex; align-items: center; gap: 1px; padding: 0 12px; background: #f3f2f5; }
.vbar .s svg { height: 10px; }
.scale { width: 32px; white-space: pre; }
.track { flex: 1; }
.track .thumb { margin-left: 49%; }

.status { display: flex; justify-content: space-between; height: 10px; flex: none; border-top: 1px solid #bbb; background: #dadadc; }
.status p { white-space: nowrap; margin-left: -2px; color: #333; }
.filters { display: flex; gap: 3px; padding-right: 36px; }
.filters svg { width: 11px; height: 11px; }
```
